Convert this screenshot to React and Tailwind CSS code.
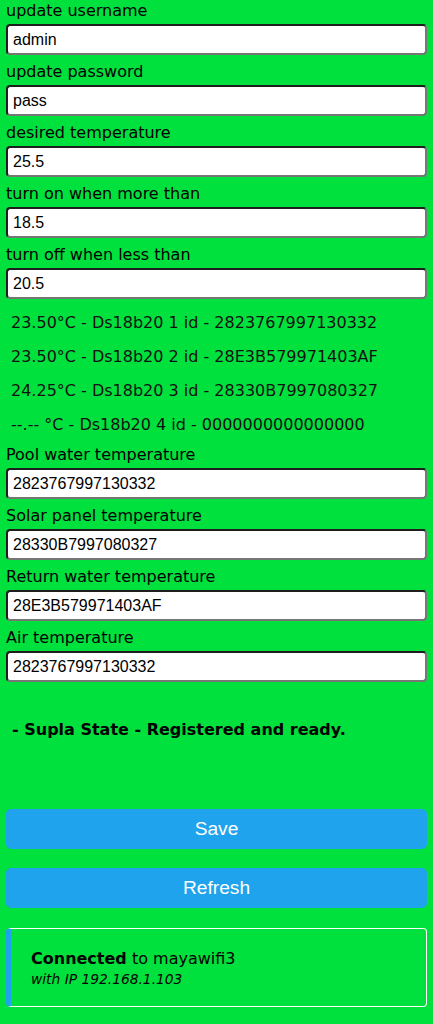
export default function App() {
  const top = [
    ['update username', 'admin'],
    ['update password', 'pass'],
    ['desired temperature', '25.5'],
    ['turn on when more than', '18.5'],
    ['turn off when less than', '20.5'],
  ];
  const sensors = [
    '23.50°C - Ds18b20 1 id - 2823767997130332',
    '23.50°C - Ds18b20 2 id - 28E3B579971403AF',
    '24.25°C - Ds18b20 3 id - 28330B7997080327',
    '--.-- °C - Ds18b20 4 id - 0000000000000000',
  ];
  const bottom = [
    ['Pool water temperature', '2823767997130332'],
    ['Solar panel temperature', '28330B7997080327'],
    ['Return water temperature', '28E3B579971403AF'],
    ['Air temperature', '2823767997130332'],
  ];

  const Field = ({ label, value }) => (
    <div className="mb-[6px]">
      <div className="h-[24px] leading-[22px] text-[16px] text-black">{label}</div>
      <input
        defaultValue={value}
        className="block w-full h-[31px] bg-white rounded-[4px] border-2 border-t-[#1e1e1e] border-l-[#1e1e1e] border-b-[#767676] border-r-[#767676] px-[5px] text-[16px] text-black outline-none font-['Liberation_Sans',Arial,sans-serif]"
      />
    </div>
  );

  return (
    <div className="min-h-screen bg-[#00e13d] px-[6px] pb-4 font-['DejaVu_Sans',Verdana,sans-serif] overflow-hidden">
      {/* 设置字段 */}
      {top.map(([l, v]) => (
        <Field key={l} label={l} value={v} />
      ))}

      {/* 传感器列表 */}
      <div className="pt-[1px] pb-[2px]">
        {sensors.map((s) => (
          <div key={s} className="h-[34px] flex items-center pl-[5px] text-[16px] text-[#111]">
            {s}
          </div>
        ))}
      </div>

      {bottom.map(([l, v]) => (
        <Field key={l} label={l} value={v} />
      ))}

      {/* 状态 */}
      <div className="mt-[36px] h-[24px] leading-[24px] pl-[6px] font-bold text-[16px] text-black">
        - Supla State - Registered and ready.
      </div>

      {/* 按钮 */}
      <div className="mt-[67px] flex flex-col gap-[19px]">
        <button className="h-[40px] w-full rounded-[5px] bg-[#1fa3ec] text-white text-[19.2px] font-['Liberation_Sans',Arial,sans-serif]">
          Save
        </button>
        <button className="h-[40px] w-full rounded-[5px] bg-[#1fa3ec] text-white text-[19.2px] font-['Liberation_Sans',Arial,sans-serif]">
          Refresh
        </button>
      </div>

      {/* 连接信息 */}
      <div className="mt-[20px] h-[79px] rounded-[4px] border border-white border-l-[5px] border-l-[#1fa3ec] pl-[20px] pt-[19px]">
        <div className="text-[16px] leading-[22px] text-black">
          <b>Connected</b> to mayawifi3
        </div>
        <div className="text-[13.8px] leading-[18px] italic text-black">with IP 192.168.1.103</div>
      </div>
    </div>
  );
}
